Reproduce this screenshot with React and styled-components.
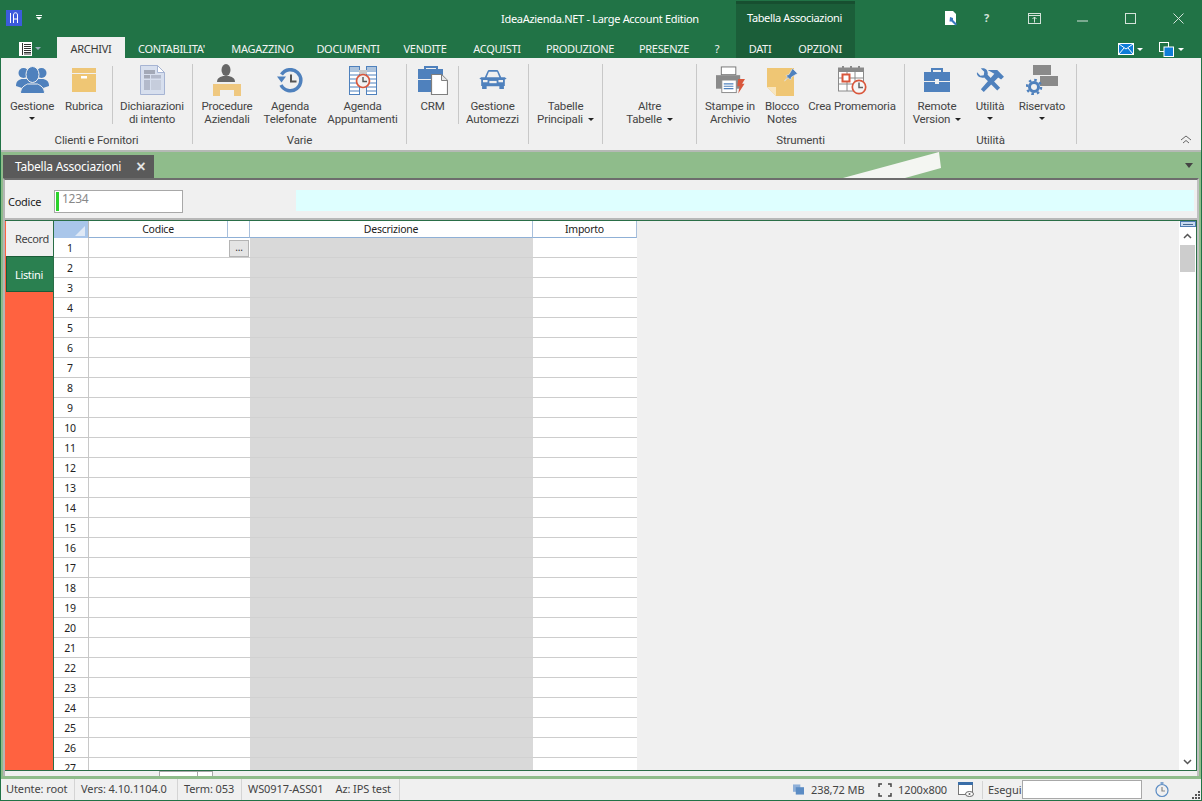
import React from "react";
import styled, { createGlobalStyle } from "styled-components";

const Global = createGlobalStyle`
  html, body { margin: 0; padding: 0; background: #217346; }
  * { box-sizing: border-box; }
  #root { width: 1202px; height: 801px; overflow: hidden; }
`;
const FONT = `"Noto Sans", "Open Sans", sans-serif`;
const NARROW = `Roboto, "Noto Sans", sans-serif`;

const Win = styled.div`
  width: 1202px; height: 801px; display: flex; flex-direction: column;
  background: #217346; font-family: ${FONT}; font-size: 11px; color: #444; letter-spacing: -0.25px;
  padding: 0 1px 1px 1px; overflow: hidden;
`;
const TitleBar = styled.div`
  height: 37px; flex: none; display: flex; align-items: flex-start; position: relative;
`;
const Logo = styled.div`
  margin: 10px 0 0 5px; line-height: 0;
`;
const Qat = styled.div`
  margin: 15px 0 0 14px; width: 6px; height: 6px; border-top: 1px solid #fff;
  &::after { content: ""; display: block; margin-top: 1px; border: 3px solid transparent; border-top: 3px solid #fff; border-bottom: 0; }
`;
const TitleText = styled.div`
  position: absolute; left: 500px; top: 11px; color: #fff; line-height: 15px; white-space: nowrap; letter-spacing: -0.3px;
`;
const ContextHead = styled.div`
  position: absolute; left: 735px; top: 1px; width: 119px; height: 57px; background: #1b5e39; border-top: 3px solid #174f30;
  color: #fff; padding: 6px 0 0 11px; line-height: 15px; white-space: nowrap; letter-spacing: -0.35px;
`;
const WinBtns = styled.div`
  position: absolute; left: 0; top: 0; right: 0; height: 37px;
`;
const WinIcon = styled.div`
  position: absolute; left: ${p => p.$x}px; top: ${p => p.$y}px; color: #d4e3da; line-height: 0;
`;
const HelpMark = styled.span`
  font: 700 11px/0 "Noto Sans", sans-serif;
`;
const TabRow = styled.div`
  height: 21px; flex: none; display: flex; align-items: stretch; position: relative; z-index: 1;
`;
const FileTab = styled.div`
  width: 56px; display: flex; align-items: center; padding: 2px 0 0 18px; gap: 3px;
`;
const Tab = styled.div`
  width: ${p => p.$w}px; display: flex; align-items: center; justify-content: center; white-space: nowrap;
  background: ${p => (p.$active ? "#f0f0f0" : "transparent")};
  color: ${p => (p.$active ? "#3a3a3a" : "#f4f4f4")};
  padding-top: 1px; letter-spacing: -0.3px;
`;
const TabRight = styled.div`
  position: absolute; right: 17px; top: 4px; display: flex; align-items: center; height: 16px;
`;
const TabCaret = styled.span`
  width: 0; height: 0; border: 3px solid transparent; border-top: 3px solid #fff; border-bottom: 0;
  margin: 0 ${p => p.$mr ?? 0}px 0 ${p => p.$ml ?? 0}px;
`;
const Ribbon = styled.div`
  height: 94px; flex: none; background: #f0f0f0; display: flex; position: relative; z-index: 1; border-bottom: 2px solid #b5b9b5;
  font-family: ${NARROW}; font-size: 11.500px; letter-spacing: -0.15px;
`;
const Group = styled.div`
  width: ${p => p.$w}px; flex: none; position: relative; display: flex; align-items: flex-start;
  padding-left: ${p => p.$pl ?? 0}px; margin-top: 6px; height: 80px;
  border-right: 1px solid #c8c8c8;
`;
const GroupLabel = styled.div`
  position: absolute; left: 0; right: 0; bottom: -4px; text-align: center; line-height: 15px; height: 15px; white-space: nowrap;
`;
const RBtn = styled.div`
  width: ${p => p.$w}px; flex: none; display: flex; flex-direction: column; align-items: center; text-align: center;
  line-height: 13px; white-space: nowrap;
`;
const Sep = styled.div`
  width: 1px; height: 58px; flex: none; background: #c8c8c8; margin: 2px 0 0 ${p => p.$ml}px;
`;
const IconBox = styled.div`
  height: 32px; flex: none; display: flex; align-items: center; justify-content: center; margin-bottom: 4px; line-height: 0;
`;
const Caret = styled.span`
  display: ${p => (p.$block ? "block" : "inline-block")};
  width: 0; height: 0; border: 3px solid transparent; border-top: 3px solid #222; border-bottom: 0;
  margin: ${p => (p.$block ? "4px auto 0" : "0 0 1px 5px")}; vertical-align: middle;
`;
const Collapse = styled.div`
  position: absolute; right: 9px; bottom: 6px; line-height: 0;
`;
const Band = styled.div`
  height: 26px; flex: none; background: #8fbc8b; position: relative; display: flex; align-items: flex-end; padding-left: 2px; overflow: hidden;
`;
const DocTab = styled.div`
  width: 151px; height: 23px; background: #5a5a5a; color: #fff; display: flex; align-items: center; padding: 0 0 0 12px;
  font-size: 12px; letter-spacing: -0.25px; white-space: nowrap;
`;
const DocClose = styled.span`
  margin-left: 15px; font-size: 16px; line-height: 14px; font-family: "Liberation Sans", sans-serif; font-weight: 700; color: #e4e4e4;
`;
const Shard = styled.svg`
  position: absolute; left: 800px; top: 0; pointer-events: none;
`;
const BandMenu = styled.div`
  position: absolute; right: 8px; top: 11px; width: 0; height: 0; border: 4px solid transparent; border-top: 5px solid #444; border-bottom: 0;
`;
const Body = styled.div`
  flex: 1; min-height: 0; background: #8fbc8b; padding: 0 2px 3px 2px; display: flex; flex-direction: column;
`;
const Panel = styled.div`
  flex: 1; min-height: 0; background: #f0f0f0; border-top: 2px solid #6d6d6d; border-left: 2px solid #b5b5b5; border-right: 2px solid #c0c0c0; display: flex; flex-direction: column;
`;
const CodeBar = styled.div`
  height: 40px; flex: none; display: flex; align-items: flex-start; border-bottom: 2px solid #b8b8b8; position: relative; padding: 10px 0 0 3px;
`;
const CodeLabel = styled.div`
  width: 46px; color: #222; line-height: 15px; padding-top: 4px;
`;
const CodeInput = styled.div`
  width: 129px; height: 23px; background: #fff; border: 1px solid #a8a8a8; color: #888; display: flex; align-items: flex-start; font-size: 12px; line-height: 15px;
`;
const GreenMark = styled.span`
  width: 3px; height: 19px; background: #2bd22b; margin: 1px 3px 0 1px; flex: none;
`;
const Cyan = styled.div`
  position: absolute; left: 291px; top: 10px; right: 3px; height: 21px; background: #deffff;
`;
const Work = styled.div`
  flex: 1; min-height: 0; display: flex; border-top: 1px solid #2a6e47; border-bottom: 1px solid #2a6e47; border-right: 1px solid #2a6e47;
`;
const Side = styled.div`
  width: 49px; flex: none; background: #ff6240; display: flex; flex-direction: column; padding-left: 1px; border-right: 1px solid #2a6e47;
`;
const SideTab = styled.div`
  height: ${p => p.$h}px; flex: none; width: 47px; display: flex; align-items: center; line-height: 15px;
  background: ${p => (p.$act ? "#f0f0f0" : "#2a8050")}; color: ${p => (p.$act ? "#444" : "#fff")};
  border-top: ${p => (p.$act ? "0" : "1px solid #1a5c38")}; border-bottom: ${p => (p.$act ? "0" : "1px solid #1a5c38")};
  border-left: ${p => (p.$act ? "0" : "1px solid #1a5c38")};
  padding-left: ${p => (p.$act ? "9px" : "8px")}; letter-spacing: -0.35px;
`;
const GridWrap = styled.div`
  flex: 1; min-width: 0; overflow: hidden; background: #f0f0f0;
`;
const Grid = styled.div`
  display: grid; grid-template-columns: 35px 139px 22px 283px 104px; grid-template-rows: 17px; grid-auto-rows: 20px; width: 583px; color: #222; font-size: 10.500px;
`;
const Corner = styled.div`
  background: #a9c6ea; border-right: 1px solid #b8b8b8; position: relative; overflow: hidden;
  &::after { content: ""; position: absolute; right: 3px; bottom: 2px; border-style: solid; border-width: 0 0 10px 10px; border-color: transparent transparent #dfe9f6 transparent; }
`;
const Head = styled.div`
  background: #fff; border-right: 1px solid #a9c0dc; border-bottom: 1px solid #8fb0d6; text-align: center; line-height: 17px; white-space: nowrap;
`;
const RowNum = styled.div`
  background: #fff; border-right: 1px solid #c8c8c8; border-bottom: 1px solid #c8c8c8; text-align: center; line-height: 20px; padding-right: 2px;
`;
const Cell = styled.div`
  background: ${p => (p.$gray ? "#d9d9d9" : "#fff")};
  border-bottom: 1px solid ${p => (p.$gray ? "#d1d1d1" : "#cdcdcd")};
  grid-column: span ${p => p.$span ?? 1};
  position: relative;
`;
const Ellipsis = styled.div`
  position: absolute; right: 1px; top: 2px; width: 20px; height: 17px; background: #e4e4e4; border: 1px solid #b4b4b4; text-align: center; line-height: 13px; color: #333; font-size: 10px;
`;
const VScroll = styled.div`
  width: 17px; flex: none; background: #fff; display: flex; flex-direction: column; align-items: center;
`;
const Split = styled.div`
  width: 16px; height: 6px; background: #c9daf0; border: 1px solid #4f7db3; flex: none; display: flex; align-items: center; justify-content: center;
  &::after { content: ""; display: block; width: 10px; height: 1px; background: #44688f; }
`;
const Thumb = styled.div`
  width: 15px; height: 27px; background: #cdcdcd; margin-top: 6px; flex: none;
`;
const ScrollEnd = styled.div`
  margin-top: ${p => (p.$auto ? "auto" : "6px")}; margin-bottom: ${p => (p.$auto ? "5px" : "0")}; line-height: 0;
`;
const HBar = styled.div`
  height: 5px; flex: none; display: flex; padding-left: 154px; background: #f0f0f0;
`;
const HThumb = styled.div`
  width: ${p => p.$w}px; height: 5px; flex: none; background: #fff; border: 1px solid #a8a8a8; border-bottom: 0; margin-right: -1px;
`;
const Status = styled.div`
  height: 21px; flex: none; background: #f0f0f0; display: flex; align-items: stretch; color: #444; line-height: 20px; white-space: nowrap; letter-spacing: -0.1px;
`;
const Seg = styled.div`
  width: ${p => p.$w}px; flex: none; padding-left: ${p => p.$pl ?? 6}px; border-right: ${p => (p.$sep ? "1px solid #d4d4d4" : "0")};
  display: flex; gap: 12px;
`;
const StatusRight = styled.div`
  margin-left: auto; display: flex; align-items: center; position: relative;
`;
const SItem = styled.div`
  display: flex; align-items: center; width: ${p => p.$w}px; flex: none;
  padding-left: ${p => p.$pl ?? 0}px;
  ${p => (p.$sep ? "border-left: 1px solid #d4d4d4; height: 18px;" : "")}
`;
const SInput = styled.div`
  width: 120px; height: 19px; background: #fff; border: 1px solid #a8a8a8; margin-left: 2px; flex: none;
`;
const Grip = styled.svg`
  position: absolute; right: 1px; bottom: 1px;
`;
const IconGap = styled.span`
  display: inline-flex; margin-right: ${p => p.$m}px; line-height: 0;
`;

const Blue = "#4f81bd";
const People = () => (
  <svg width="33" height="28" viewBox="0 0 33 28" fill={Blue}>
    <circle cx="7.500" cy="7" r="5" /><circle cx="25.500" cy="7" r="5" />
    <path d="M0 20c0-5 3-7 7-7h19c4 0 7 2 7 7l-6 2H6z" />
    <ellipse cx="16.500" cy="8.500" rx="6.500" ry="8" stroke="#f0f0f0" strokeWidth="1" />
    <path d="M4.500 27.500c0-6 4-8 7-9.500h10c3 1.500 7 3.500 7 9.500z" stroke="#f0f0f0" strokeWidth="1" />
  </svg>
);
const BoxI = () => (
  <svg width="24" height="24" viewBox="0 0 24 24">
    <rect width="24" height="5" y="0" fill="#eec678" />
    <rect width="24" height="18" y="6" fill="#efc674" />
    <rect width="6" height="2.500" x="9" y="8" fill="#fff" />
  </svg>
);
const DocI = () => (
  <svg width="25" height="30" viewBox="0 0 25 30">
    <path d="M.5.5h17l7 7v22H.5z" fill="#d7dfee" stroke="#a6b4d3" />
    <path d="M17.500.5v7h7z" fill="#fff" stroke="#a6b4d3" />
    <rect x="4" y="5" width="11" height="4" fill="#a3a9b7" /><rect x="4" y="10" width="6" height="3.500" fill="#a3a9b7" /><rect x="11" y="10" width="10" height="3.500" fill="#b3bacb" />
    <rect x="4" y="15" width="6" height="10" fill="#b3bacb" /><rect x="11" y="15" width="10" height="10" fill="#c6cddc" />
  </svg>
);
const DeskI = () => (
  <svg width="28" height="32" viewBox="0 0 28 32">
    <ellipse cx="13" cy="6" rx="4.500" ry="6" fill="#666" />
    <path d="M4 18c0-4 3-5 6-6h6c3 1 6 2 6 6z" fill="#666" />
    <path d="M0 20h28v12h-7v-6H7v6H0z" fill="#efc880" />
    <rect x="7" y="26" width="14" height="6" fill="#f0f0f0" />
  </svg>
);
const HistI = () => (
  <svg width="26" height="25" viewBox="0 0 26 25" fill="none">
    <path d="M4.500 6.500A10.500 10.500 0 1 1 4 17" stroke={Blue} strokeWidth="3.500" />
    <path d="M0 8.500h9l-4.500 6z" fill={Blue} />
    <path d="M14 6.500v7h5.500" stroke="#555" strokeWidth="2" />
  </svg>
);
const ApptI = () => (
  <svg width="28" height="29" viewBox="0 0 28 29">
    <rect x=".5" y=".5" width="10" height="28" fill="#fff" stroke={Blue} /><rect x="17.500" y=".5" width="10" height="28" fill="#fff" stroke={Blue} />
    <path d="M1 5h9M1 9h9M1 13h9M1 17h9M1 21h9M1 25h9M18 5h9M18 9h9M18 13h9M18 17h9M18 21h9M18 25h9" stroke={Blue} />
    <rect x="1" y="1" width="9" height="4" fill="#aec4dd" /><rect x="18" y="1" width="9" height="4" fill="#aec4dd" />
    <rect x="10" y="4" width="8" height="4" fill="#c9c9c9" />
    <circle cx="14" cy="15" r="6.500" fill="#f2f2f2" stroke="#d9573c" strokeWidth="1.700" />
    <path d="M14 11v4.500h4" fill="none" stroke="#555" strokeWidth="1.400" />
  </svg>
);
const CrmI = () => (
  <svg width="30" height="30" viewBox="0 0 30 30">
    <path d="M7 4V2h12v2" fill="none" stroke={Blue} strokeWidth="2" />
    <rect x="0" y="4" width="25" height="10" fill={Blue} /><rect x="0" y="15" width="25" height="12" fill={Blue} />
    <path d="M13.500 9.500h10l6 6v14H13.500z" fill="#fff" stroke="#7f7f7f" strokeWidth="1.200" />
    <path d="M23.500 10v5.500h6" fill="#e8e8e8" stroke="#7f7f7f" />
  </svg>
);
const CarI = () => (
  <svg width="28" height="20" viewBox="0 0 30 22" fill={Blue}>
    <path d="M6 8 9 1.500C9.500.5 10 0 11 0h8c1 0 1.500.5 2 1.500L24 8h4l2 1.500-2 1v7h-1V21h-5v-3H8v3H3v-3.500H2v-7l-2-1L2 8z" />
    <path d="M8 8l2.500-6h9L22 8z" fill="#f0f0f0" />
    <rect x="4" y="11" width="5" height="2.500" fill="#f0f0f0" /><rect x="21" y="11" width="5" height="2.500" fill="#f0f0f0" /><rect x="11" y="12" width="8" height="2.500" fill="#f0f0f0" />
  </svg>
);
const PrintI = () => (
  <svg width="29" height="28" viewBox="0 0 30 28">
    <rect x="5.500" y=".5" width="15" height="8" fill="#fff" stroke="#777" />
    <path d="M0 9h25v14H0z" fill="#8a8a8a" />
    <rect x="6" y="14" width="15" height="13" fill="#fff" stroke="#8a8a8a" />
    <path d="M8 18h10M8 20.500h10M8 23h10" stroke={Blue} strokeWidth="1.200" />
    <path d="M23 13h7l-3 5h2.500L23 28l1.500-7.500H22z" fill="#d9573c" />
  </svg>
);
const NoteI = () => (
  <svg width="31" height="31" viewBox="0 0 31 31">
    <path d="M0 3h27v28H9l-9-9z" fill="#efc674" />
    <path d="M0 22h9v9z" fill="#f8e6bf" />
    <path d="M19 10.500l3-1 3.500-6 5 5-6 3.500-1 3-2.200-2.200-3.800 3.200 3-3.900z" fill={Blue} stroke="#f0f0f0" strokeWidth=".6" />
  </svg>
);
const CalI = () => (
  <svg width="29" height="30" viewBox="0 0 29 30">
    <rect x=".5" y="3" width="25" height="23" fill="#fff" stroke="#8a8a8a" />
    <rect x="1" y="3" width="25" height="4" fill="#8a8a8a" />
    <path d="M5 1v5M13 1v5M21 1v5" stroke="#8a8a8a" strokeWidth="2" />
    <path d="M9 7v19M17 7v19M1 13h25M1 19h25" stroke="#8a8a8a" />
    <rect x="4.500" y="9.500" width="7" height="7" fill="#fff" stroke="#d9573c" strokeWidth="2" />
    <circle cx="21" cy="22" r="6.700" fill="#f6f6f6" stroke="#d9573c" strokeWidth="1.700" />
    <path d="M21 17.500V22.500h4" fill="none" stroke="#666" strokeWidth="1.500" />
  </svg>
);
const CaseI = () => (
  <svg width="26" height="24" viewBox="0 0 26 24">
    <path d="M8 4V1h10v3" fill="none" stroke={Blue} strokeWidth="2" />
    <rect x="0" y="4" width="26" height="9" fill={Blue} /><rect x="0" y="14" width="26" height="10" fill={Blue} />
    <rect x="11" y="11" width="4" height="5" fill="#f0f0f0" />
  </svg>
);
const ToolsI = () => (
  <svg width="29" height="25" viewBox="0 0 30 26" fill={Blue}>
    <path d="M1 4.500 4.500 8 8 7.500 8.500 4 5 .5C9-.8 13 2 12 7l13 13.500-3 3L8.500 10C4 11 0 8 1 4.500z" />
    <path d="M12 2h10l7 7-3 3-3-2L8 25l-3-3L19 6z" />
  </svg>
);
const ResI = () => (
  <svg width="32" height="30" viewBox="0 0 32 30">
    <rect x="7" y="0" width="18" height="10" fill="#8a8a8a" />
    <rect x="14" y="11" width="18" height="10" fill="#8a8a8a" />
    <circle cx="8" cy="22" r="4.500" fill="none" stroke={Blue} strokeWidth="3" />
    <circle cx="8" cy="22" r="7" fill="none" stroke={Blue} strokeWidth="2.500" strokeDasharray="2.500 3" />
  </svg>
);

const ribbon = [
  { w: 192, pl: 3, label: "Clienti e Fornitori", btns: [
    { w: 56, t: "Gestione", icon: <People />, caret: "block" },
    { w: 48, t: "Rubrica", icon: <BoxI />, sepAfter: 4 },
    { w: 78, t: "Dichiarazioni\ndi intento", icon: <DocI /> },
  ] },
  { w: 214, label: "Varie", btns: [
    { w: 68, t: "Procedure\nAziendali", icon: <DeskI /> },
    { w: 58, t: "Agenda\nTelefonate", icon: <HistI /> },
    { w: 87, t: "Agenda\nAppuntamenti", icon: <ApptI /> },
  ] },
  { w: 122, label: "", btns: [
    { w: 51, t: "CRM", icon: <CrmI />, sepAfter: 0 },
    { w: 67, t: "Gestione\nAutomezzi", icon: <CarI /> },
  ] },
  { w: 74, label: "", btns: [{ w: 73, t: "Tabelle\nPrincipali", icon: null, caret: "inline" }] },
  { w: 94, label: "", btns: [{ w: 93, t: "Altre\nTabelle", icon: null, caret: "inline" }] },
  { w: 208, label: "Strumenti", btns: [
    { w: 66, t: "Stampe in\nArchivio", icon: <PrintI /> },
    { w: 38, t: "Blocco\nNotes", icon: <NoteI /> },
    { w: 102, t: "Crea Promemoria", icon: <CalI /> },
  ] },
  { w: 172, label: "Utilità", btns: [
    { w: 64, t: "Remote\nVersion", icon: <CaseI />, caret: "inline" },
    { w: 42, t: "Utilità", icon: <ToolsI />, caret: "block" },
    { w: 62, t: "Riservato", icon: <ResI />, caret: "block" },
  ] },
];

const tabs = [["ARCHIVI", 68, true], ["CONTABILITA'", 93], ["MAGAZZINO", 89], ["DOCUMENTI", 82], ["VENDITE", 72], ["ACQUISTI", 72], ["PRODUZIONE", 94], ["PRESENZE", 74], ["?", 32], ["DATI", 54], ["OPZIONI", 66]];

function RibbonBtn({ b }) {
  const lines = b.t.split("\n");
  return (
    <>
      <RBtn $w={b.w}>
        <IconBox>{b.icon}</IconBox>
        {lines.map((l, i) => (
          <div key={i}>{l}{b.caret === "inline" && i === lines.length - 1 && <Caret />}</div>
        ))}
        {b.caret === "block" && <Caret $block />}
      </RBtn>
      {b.sepAfter !== undefined && <Sep $ml={b.sepAfter} />}
    </>
  );
}

export default function App() {
  const rows = Array.from({ length: 27 }, (_, i) => i + 1);
  return (
    <Win>
      <Global />
      <TitleBar>
        <Logo>
          <svg width="16" height="16" viewBox="0 0 16 16" fill="none" stroke="#fff" strokeWidth="1">
            <rect width="16" height="16" fill="#3c5bdc" stroke="none" />
            <path d="M4.500 3v10M7.500 13V5c0-3 4-3 4 0v8M7.500 9h4" />
          </svg>
        </Logo>
        <Qat />
        <ContextHead>Tabella Associazioni</ContextHead>
        <TitleText>IdeaAzienda.NET - Large Account Edition</TitleText>
        <WinBtns>
          <WinIcon $x={944} $y={11}>
            <svg width="14" height="15" viewBox="0 0 14 15"><path d="M0 0h8l3 3v11H0z" fill="#fff" /><path d="M5 6l3 1 0 2 4 4-1.500 1.500-4-4-2 0z" fill="#3a78c0" /></svg>
          </WinIcon>
          <WinIcon $x={983} $y={18}><HelpMark>?</HelpMark></WinIcon>
          <WinIcon $x={1027} $y={13}>
            <svg width="13" height="12" viewBox="0 0 13 12" fill="none" stroke="#d4e3da"><rect x=".5" y=".5" width="12" height="10" /><path d="M.5 2.500h12M6.500 9.500V4M4.500 6l2-2 2 2" /></svg>
          </WinIcon>
          <WinIcon $x={1076} $y={18}><svg width="11" height="2"><path d="M0 1h11" stroke="#d4e3da" /></svg></WinIcon>
          <WinIcon $x={1124} $y={13}><svg width="11" height="11" fill="none"><rect x=".5" y=".5" width="10" height="10" stroke="#d4e3da" /></svg></WinIcon>
          <WinIcon $x={1172} $y={13}><svg width="11" height="11"><path d="M.5.5l10 10M10.500.5l-10 10" stroke="#d4e3da" /></svg></WinIcon>
        </WinBtns>
      </TitleBar>
      <TabRow>
        <FileTab>
          <svg width="13" height="14" viewBox="0 0 13 14"><rect width="13" height="14" fill="#fff" /><path d="M3.500 1v12M5 2.500h7M5 4.500h7M5 6.500h7M5 8.500h7M5 10.500h7M5 12h7" stroke="#333" /></svg>
          <TabCaret style={{ borderTopColor: "#9ab" }} />
        </FileTab>
        {tabs.map(([t, w, a]) => <Tab key={t} $w={w} $active={a}>{t}</Tab>)}
        <TabRight>
          <svg width="16" height="12" viewBox="0 0 16 12"><rect width="16" height="12" fill="#fff" /><rect x="1" y="1" width="14" height="10" fill="#0f7dd8" /><path d="M1 1l7 5 7-5M1 11l5-6M15 11l-5-6" stroke="#fff" fill="none" /></svg>
          <TabCaret $ml={3} $mr={16} />
          <svg width="15" height="15" viewBox="0 0 15 15"><rect x=".5" y=".5" width="9" height="9" fill="#217346" stroke="#fff" /><rect x="5" y="5" width="9.500" height="9.500" fill="#0f7dd8" stroke="#fff" /></svg>
          <TabCaret $ml={4} />
        </TabRight>
      </TabRow>
      <Ribbon>
        {ribbon.map((g, i) => (
          <Group key={i} $w={g.w} $pl={g.pl}>
            {g.btns.map((b, j) => <RibbonBtn key={j} b={b} />)}
            {g.label && <GroupLabel>{g.label}</GroupLabel>}
          </Group>
        ))}
        <Collapse>
          <svg width="12" height="9" viewBox="0 0 12 9" fill="none" stroke="#666"><path d="M1 5l5-4 5 4M3 8l3-2.500L9 8" /></svg>
        </Collapse>
      </Ribbon>
      <Band>
        <DocTab>Tabella Associazioni<DocClose>×</DocClose></DocTab>
        <Shard width="142" height="26" viewBox="0 0 142 26">
          <path d="M42 26 138 0l2 16-36 10z" fill="#f4f6f2" />
        </Shard>
        <BandMenu />
      </Band>
      <Body>
        <Panel>
          <CodeBar>
            <CodeLabel>Codice</CodeLabel>
            <CodeInput><GreenMark />1234</CodeInput>
            <Cyan />
          </CodeBar>
          <Work>
            <Side>
              <SideTab $act $h={35}>Record</SideTab>
              <SideTab $h={36}>Listini</SideTab>
            </Side>
            <GridWrap>
              <Grid>
                <Corner />
                <Head>Codice</Head>
                <Head />
                <Head>Descrizione</Head>
                <Head>Importo</Head>
                {rows.map((r) => (
                  <React.Fragment key={r}>
                    <RowNum>{r}</RowNum>
                    <Cell $span={2}>{r === 1 && <Ellipsis>...</Ellipsis>}</Cell>
                    <Cell $gray />
                    <Cell />
                  </React.Fragment>
                ))}
              </Grid>
            </GridWrap>
            <VScroll>
              <Split />
              <ScrollEnd>
                <svg width="9" height="6" viewBox="0 0 9 6" fill="none" stroke="#555" strokeWidth="1.500"><path d="M1 5l3.500-3.500L8 5" /></svg>
              </ScrollEnd>
              <Thumb />
              <ScrollEnd $auto>
                <svg width="9" height="6" viewBox="0 0 9 6" fill="none" stroke="#555" strokeWidth="1.500"><path d="M1 1l3.500 3.500L8 1" /></svg>
              </ScrollEnd>
            </VScroll>
          </Work>
          <HBar><HThumb $w={39} /><HThumb $w={16} /></HBar>
        </Panel>
      </Body>
      <Status>
        <Seg $w={74} $sep $pl={5}>Utente: root</Seg>
        <Seg $w={103} $sep>Vers: 4.10.1104.0</Seg>
        <Seg $w={64} $sep>Term: 053</Seg>
        <Seg $w={158} $sep><span>WS0917-ASS01</span><span>Az: IPS test</span></Seg>
        <StatusRight>
          <SItem $w={85}>
            <IconGap $m={7}><svg width="11" height="11" viewBox="0 0 12 11"><rect width="8" height="8" fill="#8fb0d8" /><rect x="3" y="3" width="9" height="8" fill="#5b8cc4" /></svg></IconGap>
            238,72 MB
          </SItem>
          <SItem $w={80}>
            <IconGap $m={6}><svg width="14" height="14" viewBox="0 0 14 14" fill="none" stroke="#444" strokeWidth="1.500"><path d="M1 4V1h3M10 1h3v3M13 10v3h-3M4 13H1v-3" /></svg></IconGap>
            1200x800
          </SItem>
          <SItem $w={24}>
            <svg width="16" height="15" viewBox="0 0 16 15"><rect x=".5" y=".5" width="14" height="12" fill="#fff" stroke="#777" /><rect width="15" height="3" fill="#3a6ea8" /><ellipse cx="11.500" cy="12" rx="4" ry="2.500" fill="#fff" stroke="#666" /><circle cx="11.500" cy="12" r="1" fill="#666" /></svg>
          </SItem>
          <SItem $w={38} $sep $pl={5}>Esegui</SItem>
          <SInput />
          <SItem $w={59} $pl={13}>
            <svg width="14" height="16" viewBox="0 0 14 16" fill="none" stroke="#5b8cc4" strokeWidth="1.200"><circle cx="7" cy="8.500" r="6" /><path d="M5.500 1h3" strokeWidth="1.500" /><path d="M7 5v4h3" stroke="#888" /></svg>
          </SItem>
          <Grip width="8" height="8" viewBox="0 0 8 8" fill="#555"><rect x="6" y="0" width="2" height="2" /><rect x="3" y="3" width="2" height="2" /><rect x="6" y="3" width="2" height="2" /><rect x="0" y="6" width="2" height="2" /><rect x="3" y="6" width="2" height="2" /><rect x="6" y="6" width="2" height="2" /></Grip>
        </StatusRight>
      </Status>
    </Win>
  );
}
